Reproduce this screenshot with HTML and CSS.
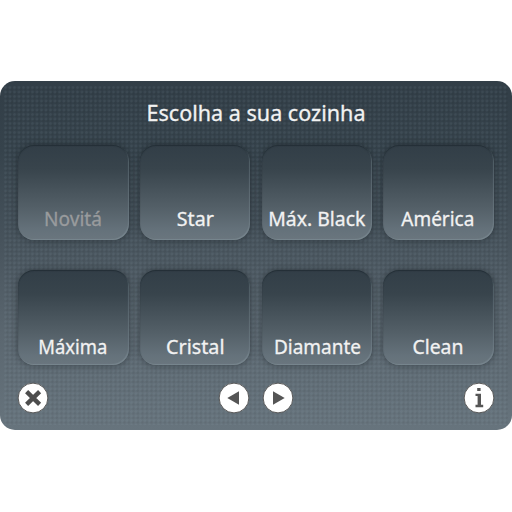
FILE: index.html
```
<!DOCTYPE html>
<html lang="pt">
<head>
<meta charset="utf-8">
<title>Escolha a sua cozinha</title>
<link rel="stylesheet" href="styles.css">
</head>
<body>
<main class="panel">
  <h1 class="title"><svg width="260" height="32"><text x="20.5" y="24.3" textLength="219" lengthAdjust="spacingAndGlyphs">Escolha a sua cozinha</text></svg></h1>
  <div class="grid">
    <button class="tile off"><svg width="110" height="30"><text x="26" y="22.3" textLength="58" lengthAdjust="spacingAndGlyphs">Novitá</text></svg></button>
    <button class="tile"><svg width="110" height="30"><text x="36.8" y="22.3" textLength="37" lengthAdjust="spacingAndGlyphs">Star</text></svg></button>
    <button class="tile"><svg width="110" height="30"><text x="6.3" y="22.3" textLength="97" lengthAdjust="spacingAndGlyphs">Máx. Black</text></svg></button>
    <button class="tile"><svg width="110" height="30"><text x="18.3" y="22.3" textLength="73" lengthAdjust="spacingAndGlyphs">América</text></svg></button>
    <button class="tile low"><svg width="110" height="30"><text x="20.3" y="22.3" textLength="69" lengthAdjust="spacingAndGlyphs">Máxima</text></svg></button>
    <button class="tile low"><svg width="110" height="30"><text x="26" y="22.3" textLength="58.5" lengthAdjust="spacingAndGlyphs">Cristal</text></svg></button>
    <button class="tile low"><svg width="110" height="30"><text x="12" y="22.3" textLength="87" lengthAdjust="spacingAndGlyphs">Diamante</text></svg></button>
    <button class="tile low"><svg width="110" height="30"><text x="29.4" y="22.3" textLength="51" lengthAdjust="spacingAndGlyphs">Clean</text></svg></button>
  </div>
  <nav class="bar">
    <svg class="icon" viewBox="0 0 32 32"><circle cx="16" cy="16" r="14.9"/><path class="cross" d="M9.6 9.6 22.6 22.4M22.6 9.6 9.6 22.4"/></svg>
    <div class="arrows">
      <svg class="icon" viewBox="0 0 32 32"><circle cx="16" cy="16" r="14.9"/><path class="fill" d="M9.3 16 21 9.2V22.8Z"/></svg>
      <svg class="icon" viewBox="0 0 32 32"><circle cx="16" cy="16" r="14.9"/><path class="fill" d="M22.7 16 11 9.2V22.8Z"/></svg>
    </div>
    <svg class="icon" viewBox="0 0 32 32"><circle cx="16" cy="16" r="14.9"/><path class="fill" d="M14.2 6H17.6V9H14.2ZM12.5 11.8H18V22.8H20.2V25.2H12.5V22.8H14.6V14.1H12.5Z"/></svg>
  </nav>
</main>
</body>
</html>
```
FILE: styles.css
```
body {
  margin: 0;
  padding-top: 81px;
  background: #fff;
  font-family: "Trebuchet MS", "Noto Sans", sans-serif;
}
.panel {
  position: relative;
  box-sizing: border-box;
  height: 349px;
  padding-top: 16px;
  border-radius: 15px;
  background: linear-gradient(#323e47, #36434c 20%, #48545d 47%, #5b6770 73%, #67747d);
}
.panel::before {
  content: "";
  position: absolute;
  inset: 5px 4px;
  background:
    radial-gradient(circle at 1.5px 1.5px, rgba(160, 185, 200, .09) .9px, transparent 1.8px),
    radial-gradient(circle at 3.3px 3.3px, rgba(0, 0, 0, .06) .7px, transparent 1.5px);
  background-size: 4.5px 4.5px;
}
.title {
  position: relative;
  display: flex;
  justify-content: center;
  margin: 0;
  height: 32px;
}
svg { display: block; }
text { font-size: 19px; font-weight: 400; fill: #f2f2f2; stroke: #f2f2f2; stroke-width: .3; }
.title text { font-size: 22.5px; }
.grid {
  position: relative;
  display: grid;
  grid-template-columns: repeat(4, 110.5px);
  grid-auto-rows: 95px;
  gap: 30px 11.3px;
  margin: 16px 0 0 18px;
}
.tile {
  display: flex;
  align-items: flex-end;
  border: 0;
  padding: 0 0 6px;
  border-radius: 16px;
  font: inherit;
  background: linear-gradient(#323e47, #38444c 25%, #535f67 65%, #65727b 90%, #6a767e);
  box-shadow: 0 0 7px rgba(20, 26, 30, .5), inset 0 1px 1px rgba(20, 30, 36, .5), inset -1px -1px 1px rgba(150, 165, 175, .35);
}
.low { padding-bottom: 3px; }
.off text { fill: #999b9d; stroke: #999b9d; }
.bar {
  position: relative;
  display: flex;
  justify-content: space-between;
  margin: 17px 17px 0;
}
.arrows { display: flex; gap: 12px; }
.icon { width: 32px; height: 32px; }
.icon circle { fill: #fff; stroke: #555; stroke-width: 1; }
.cross { stroke: #4d4d4d; stroke-width: 4.4; fill: none; }
.fill { fill: #555; }
```
